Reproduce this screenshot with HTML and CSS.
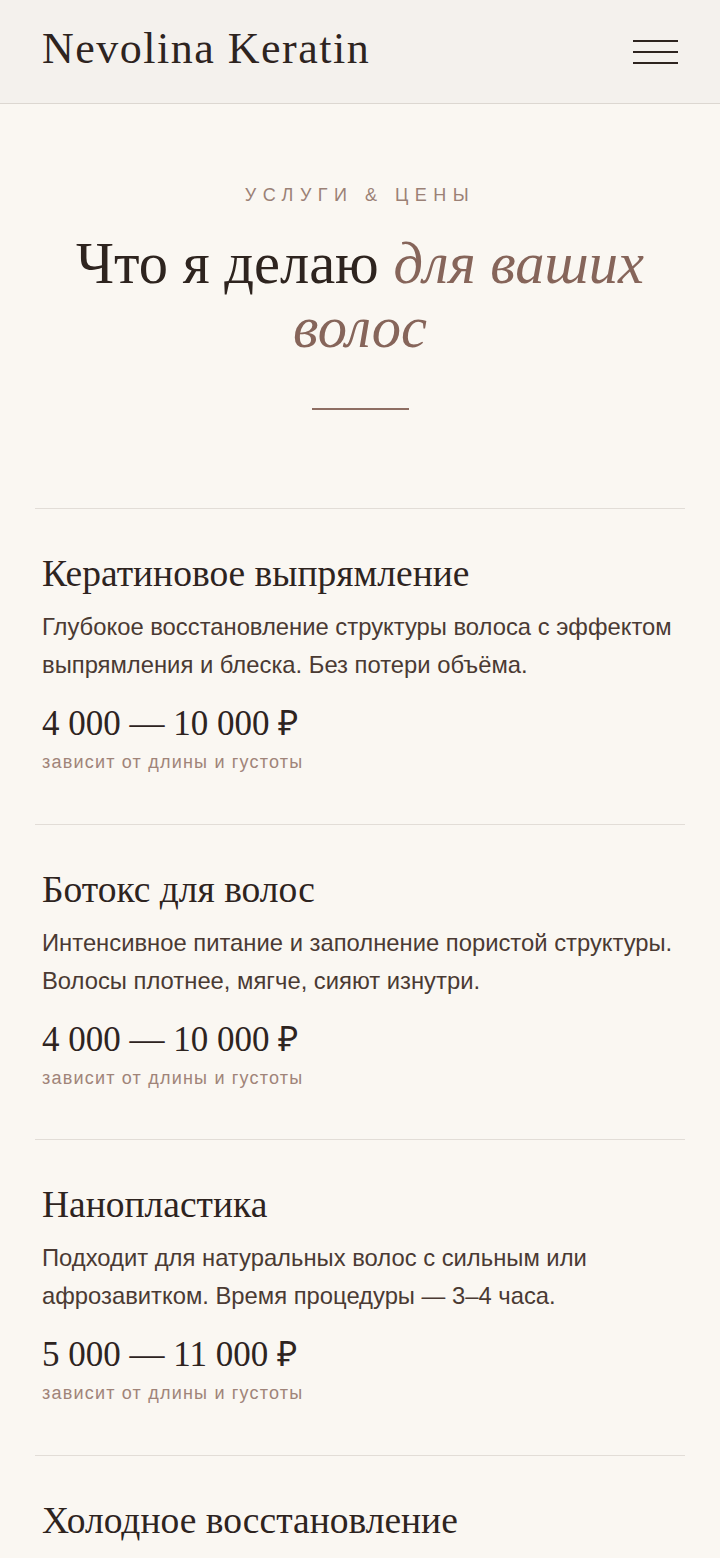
FILE: index.html
```html
<!DOCTYPE html>
<html lang="ru">
<head>
<meta charset="utf-8">
<title>Nevolina Keratin — Услуги и цены</title>
<link rel="stylesheet" href="styles.css">
</head>
<body>
<header class="site-header">
  <div class="logo">Nevolina Keratin</div>
  <button class="menu-btn" aria-label="Меню">
    <span></span><span></span><span></span>
  </button>
</header>
<main class="page">
  <section class="intro">
    <p class="eyebrow">Услуги &amp; цены</p>
    <h1 class="title">Что я делаю <em>для ваших волос</em></h1>
    <div class="rule"></div>
  </section>
  <section class="services">
    <article class="service">
      <h2 class="service-name">Кератиновое выпрямление</h2>
      <p class="service-desc">Глубокое восстановление структуры волоса с эффектом выпрямления и блеска. Без потери объёма.</p>
      <div class="service-price">4 000 — 10 000 ₽</div>
      <div class="service-note">зависит от длины и густоты</div>
    </article>
    <article class="service">
      <h2 class="service-name">Ботокс для волос</h2>
      <p class="service-desc">Интенсивное питание и заполнение пористой структуры. Волосы плотнее, мягче, сияют изнутри.</p>
      <div class="service-price">4 000 — 10 000 ₽</div>
      <div class="service-note">зависит от длины и густоты</div>
    </article>
    <article class="service">
      <h2 class="service-name">Нанопластика</h2>
      <p class="service-desc">Подходит для натуральных волос с сильным или афрозавитком. Время процедуры — 3–4 часа.</p>
      <div class="service-price">5 000 — 11 000 ₽</div>
      <div class="service-note">зависит от длины и густоты</div>
    </article>
    <article class="service">
      <h2 class="service-name">Холодное восстановление</h2>
      <p class="service-desc">Бережный уход без нагрева для тонких и ослабленных волос.</p>
      <div class="service-price">3 000 — 7 000 ₽</div>
      <div class="service-note">зависит от длины и густоты</div>
    </article>
  </section>
</main>
</body>
</html>
```
FILE: styles.css
```css
* { box-sizing: border-box; }
html, body { margin: 0; padding: 0; }
body {
  background: #faf7f2;
  color: #2e241f;
  font-family: "Liberation Serif", "Times New Roman", serif;
}
.site-header {
  height: 104px;
  background: #f4f1ed;
  border-bottom: 1px solid #dcd7d1;
  display: flex;
  align-items: center;
  justify-content: space-between;
  padding: 0 42px;
}
.logo {
  font-family: "Liberation Serif", serif;
  font-size: 44px;
  letter-spacing: 1.5px;
  line-height: 1;
  color: #2e241f;
  padding-bottom: 6px;
}
.menu-btn {
  width: 45px;
  height: 24px;
  padding: 0;
  border: 0;
  background: none;
  display: flex;
  flex-direction: column;
  justify-content: space-between;
}
.menu-btn span {
  display: block;
  height: 2px;
  background: #2e241f;
}
.page { padding: 0 35px; }
.intro {
  text-align: center;
  padding: 78px 0 98px;
}
.eyebrow {
  margin: 0;
  font-family: "Liberation Sans", Arial, sans-serif;
  font-size: 18px;
  line-height: 26px;
  letter-spacing: 6.5px;
  text-transform: uppercase;
  color: #9b8176;
}
.title {
  margin: 24px 0 0;
  font-weight: normal;
  font-size: 58.5px;
  line-height: 64px;
  color: #2e241f;
}
.title em {
  color: #86655a;
  font-style: italic;
}
.rule {
  width: 97px;
  height: 2px;
  background: #8e6e63;
  margin: 48px auto 0;
}
.service {
  border-top: 1px solid #e2ddd7;
  padding: 42px 7px 48.5px;
}
.service-name {
  margin: 0;
  font-weight: normal;
  font-size: 37.5px;
  line-height: 46px;
  color: #2e241f;
}
.service-desc {
  margin: 11px 0 0;
  font-family: "Liberation Sans", Arial, sans-serif;
  font-size: 23.8px;
  line-height: 38px;
  color: #4a3a33;
}
.service-price {
  margin-top: 18px;
  font-size: 35px;
  line-height: 44px;
  color: #2e241f;
}
.service-note {
  margin-top: 3px;
  font-family: "Liberation Sans", Arial, sans-serif;
  font-size: 18px;
  line-height: 26px;
  letter-spacing: 1.2px;
  color: #a08479;
}
```
